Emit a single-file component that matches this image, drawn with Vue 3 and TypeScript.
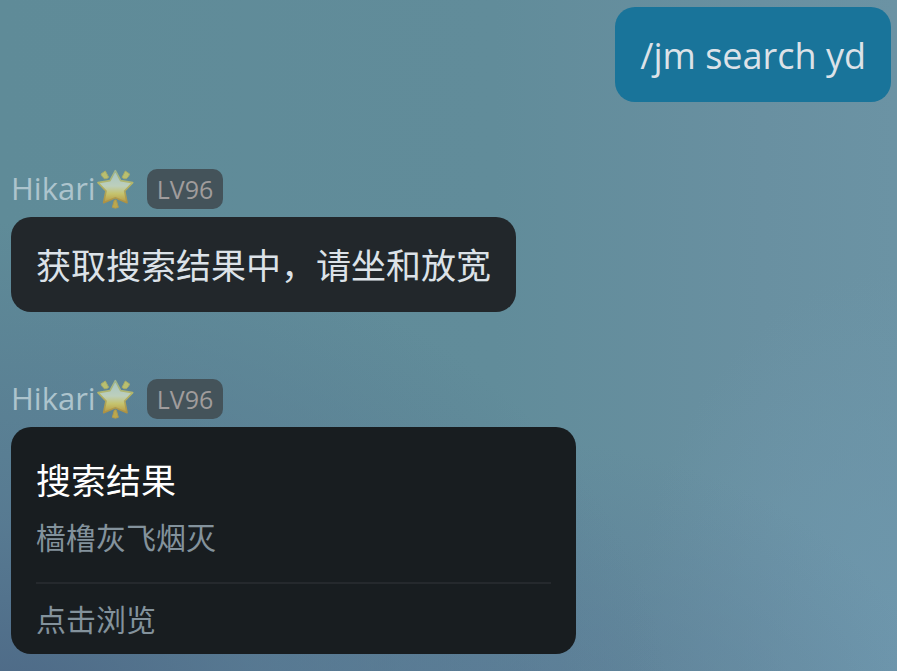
<script setup lang="ts">
interface Message {
  id: number
  kind: 'own' | 'reply' | 'result'
  text: string
  detail?: string
  action?: string
}

const messages: Message[] = [
  { id: 1, kind: 'own', text: '/jm search yd' },
  { id: 2, kind: 'reply', text: '获取搜索结果中，请坐和放宽' },
  { id: 3, kind: 'result', text: '搜索结果', detail: '樯橹灰飞烟灭', action: '点击浏览' },
]
</script>

<template>
  <main class="chat">
    <article v-for="m in messages" :key="m.id" class="message" :class="m.kind">
      <header v-if="m.kind !== 'own'" class="sender">
        <span class="name">Hikari</span>
        <svg class="star" viewBox="0 0 114 120" aria-hidden="true">
          <defs>
            <linearGradient :id="`star-fill-${m.id}`" x1="0" y1="0" x2="0" y2="1">
              <stop offset="0" stop-color="#a5c5c5" />
              <stop offset="0.48" stop-color="#bdcfbc" />
              <stop offset="0.72" stop-color="#c5c36d" />
              <stop offset="1" stop-color="#b69843" />
            </linearGradient>
            <linearGradient :id="`star-edge-${m.id}`" x1="0" y1="0" x2="0" y2="1">
              <stop offset="0" stop-color="#9db591" />
              <stop offset="0.4" stop-color="#b3b66a" />
              <stop offset="1" stop-color="#ad9143" />
            </linearGradient>
          </defs>
          <path
            d="M58 5 L74 35 L110 41 L86 66 L93 101 L58 86 L23 101 L30 66 L6 41 L42 35 Z"
            :fill="`url(#star-fill-${m.id})`"
            :stroke="`url(#star-edge-${m.id})`"
            stroke-width="5"
            stroke-linejoin="round"
          />
          <g fill="#b9bf70" stroke="#a6ac68" stroke-width="3" stroke-linejoin="round">
            <path d="M28 6 L38 25 Q32 31 25 29 Q17 23 15 15 Z" />
            <path d="M88 6 L78 25 Q84 31 91 29 Q99 23 101 15 Z" />
            <path d="M55 94 Q58 91 61 94 L67 115 Q58 120 49 115 Z" fill="#bba84f" stroke="#b39b49" />
          </g>
        </svg>
        <span class="level">LV96</span>
      </header>

      <p v-if="m.kind !== 'result'" class="bubble">{{ m.text }}</p>
      <section v-else class="card">
        <h2 class="title">{{ m.text }}</h2>
        <p class="detail">{{ m.detail }}</p>
        <a class="action" href="#">{{ m.action }}</a>
      </section>
    </article>
  </main>
</template>

<style>
body {
  margin: 0;
}
</style>

<style scoped>
.chat {
  box-sizing: border-box;
  min-height: 100vh;
  padding: 7px 6px 17px 11px;
  display: flex;
  flex-direction: column;
  gap: 67px;
  font-family: "Open Sans", "Noto Sans CJK SC", sans-serif;
  background:
    radial-gradient(ellipse 75% 75% at 0% 108%, #4c6785 0%, rgba(84, 115, 143, 0.7) 40%, rgba(92, 130, 150, 0) 100%),
    radial-gradient(ellipse 50% 45% at 55% 110%, rgba(92, 124, 152, 0.85) 0%, rgba(96, 132, 156, 0) 100%),
    radial-gradient(ellipse 30% 60% at 100% 100%, #6e97ad 0%, rgba(110, 151, 173, 0) 100%),
    linear-gradient(90deg, #5f8b98 0%, #618c9a 55%, #6990a1 85%, #6b93a4 100%);
}

.message {
  display: flex;
  flex-direction: column;
  align-items: flex-start;
  gap: 8px;
}

.own {
  align-items: flex-end;
}

.sender {
  display: flex;
  align-items: center;
  height: 40px;
}

.name {
  font-size: 31px;
  line-height: 38px;
  padding-bottom: 2px;
  color: #adc4cd;
}

.star {
  width: 38px;
  height: 40px;
}

.level {
  margin-left: 13px;
  padding: 0 10px;
  border-radius: 10px;
  font-size: 25px;
  line-height: 40px;
  color: #a09c9c;
  background: #44535a;
}

.bubble {
  margin: 0;
  padding: 26px 25px 24px;
  border-radius: 20px;
  font-size: 35px;
  line-height: 45px;
  color: #dce2e8;
  background: #22272b;
}

.own .bubble {
  font-size: 36px;
  background: #19749a;
}

.card {
  box-sizing: border-box;
  width: 63%;
  min-width: 565px;
  padding: 31px 25px 14px;
  border-radius: 20px;
  background: #181d20;
}

.title,
.detail {
  margin: 0;
}

.title {
  font-size: 35px;
  font-weight: 400;
  line-height: 45px;
  color: #ffffff;
}

.detail {
  padding: 15px 0 24px;
  font-size: 30px;
  line-height: 40px;
  color: #83929c;
}

.action {
  display: block;
  padding-top: 16px;
  border-top: 2px solid #25292d;
  font-size: 30px;
  line-height: 40px;
  color: #83929c;
  text-decoration: none;
}
</style>
